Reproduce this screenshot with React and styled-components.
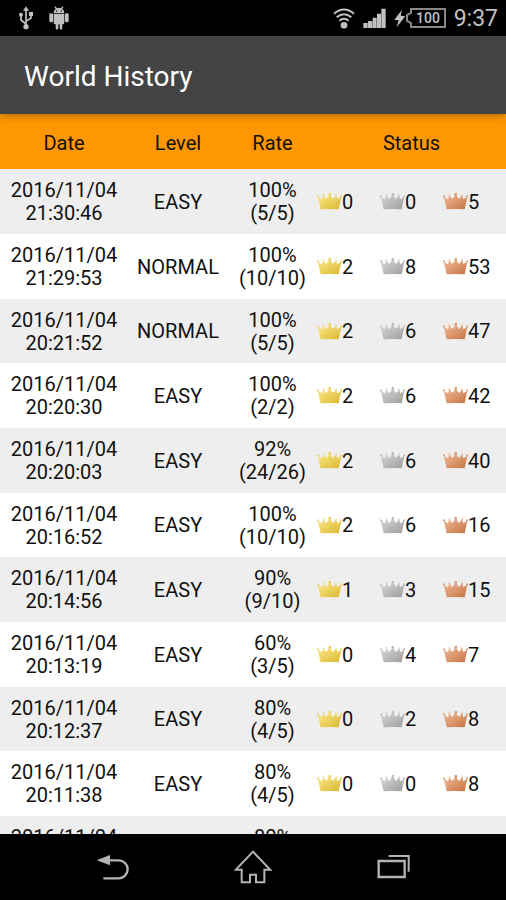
import React from 'react'
import styled, { createGlobalStyle } from 'styled-components'

const GlobalStyle = createGlobalStyle`
    * {
        box-sizing: border-box;
    }
    body {
        margin: 0;
        background-color: black;
        color: #111;
        font-family: Roboto, "Liberation Sans", sans-serif;
    }
`

const Screen = styled.div`
    display: flex;
    flex-direction: column;
    height: 100vh;
`

const StatusBar = styled.div`
    display: flex;
    flex: none;
    align-items: center;
    justify-content: space-between;
    height: 36px;
    padding: 0 8px 0 18px;
    background-color: black;
    color: #c0c0c0;
`

const StatusGroup = styled.div`
    display: flex;
    align-items: center;
    gap: ${props => props.$gap}px;
`

const Battery = styled.div`
    display: flex;
    align-items: center;
`

const Clock = styled.span`
    padding-top: 2px;
    font-size: 23px;
    line-height: 34px;
`

const AppBar = styled.header`
    position: relative;
    z-index: 1;
    display: flex;
    flex: none;
    align-items: center;
    height: 78px;
    padding: 4px 24px 0;
    background-color: #444;
    box-shadow: 0 2px 8px rgba(0, 0, 0, 0.3);
`

const Title = styled.h1`
    margin: 0;
    color: white;
    font-size: 28px;
    font-weight: 400;
    line-height: 36px;
`

const List = styled.main`
    flex: 1;
    min-height: 0;
    overflow: hidden;
    background-color: white;
`

const HistoryTable = styled.table`
    width: 100%;
    table-layout: fixed;
    border-collapse: collapse;
    font-size: 20px;
    line-height: 23px;
    text-align: center;
`

const Col = styled.col`
    width: ${props => props.$width}px;
`

const HeadCell = styled.th`
    height: 55px;
    padding: 4px 0 0;
    background-color: #ff9800;
    font-weight: 400;
`

const Row = styled.tr`
    height: 65px;
    background-color: white;

    &:nth-child(odd) {
        background-color: #eee;
    }
    &:nth-child(3n) {
        height: 64px;
    }
`

const Cell = styled.td`
    padding: 1px 0 0;
`

const Line = styled.div`
    white-space: nowrap;
`

const Medal = styled.div`
    display: flex;
    align-items: center;
`

const NavBar = styled.nav`
    display: flex;
    flex: none;
    justify-content: center;
    height: 66px;
    background-color: black;
`

const NavButton = styled.button`
    display: flex;
    align-items: center;
    justify-content: center;
    width: 140px;
    padding: 0;
    border: 0;
    background: none;
    color: #b4b4b4;
`

const crowns = {
    gold: ['#f6e07a', '#dcbc38'],
    silver: ['#cdcdcd', '#a3a3a3'],
    bronze: ['#e8ae8a', '#ca7a4a']
}

const history = [
    { date: '2016/11/04', time: '21:30:46', level: 'EASY', rate: '100%', score: '(5/5)', medals: [0, 0, 5] },
    { date: '2016/11/04', time: '21:29:53', level: 'NORMAL', rate: '100%', score: '(10/10)', medals: [2, 8, 53] },
    { date: '2016/11/04', time: '20:21:52', level: 'NORMAL', rate: '100%', score: '(5/5)', medals: [2, 6, 47] },
    { date: '2016/11/04', time: '20:20:30', level: 'EASY', rate: '100%', score: '(2/2)', medals: [2, 6, 42] },
    { date: '2016/11/04', time: '20:20:03', level: 'EASY', rate: '92%', score: '(24/26)', medals: [2, 6, 40] },
    { date: '2016/11/04', time: '20:16:52', level: 'EASY', rate: '100%', score: '(10/10)', medals: [2, 6, 16] },
    { date: '2016/11/04', time: '20:14:56', level: 'EASY', rate: '90%', score: '(9/10)', medals: [1, 3, 15] },
    { date: '2016/11/04', time: '20:13:19', level: 'EASY', rate: '60%', score: '(3/5)', medals: [0, 4, 7] },
    { date: '2016/11/04', time: '20:12:37', level: 'EASY', rate: '80%', score: '(4/5)', medals: [0, 2, 8] },
    { date: '2016/11/04', time: '20:11:38', level: 'EASY', rate: '80%', score: '(4/5)', medals: [0, 0, 8] },
    { date: '2016/11/04', time: '20:10:52', level: 'EASY', rate: '80%', score: '(4/5)', medals: [0, 0, 7] }
]

const CrownDefs = () => (
    <svg width="0" height="0" style={{ display: 'block' }} aria-hidden="true">
        <defs>
            {Object.keys(crowns).map(kind => (
                <linearGradient key={kind} id={kind} x1="0" y1="0" x2="1" y2="1">
                    <stop offset="0.2" stopColor={crowns[kind][0]} />
                    <stop offset="0.9" stopColor={crowns[kind][1]} />
                </linearGradient>
            ))}
        </defs>
    </svg>
)

const Crown = ({ kind }) => (
    <svg width="25" height="20" viewBox="0 0 75 60" fill={`url(#${kind})`} aria-hidden="true">
        <path d="M2 14 L15 22 L18 11 L20 11 L27 20 L31 18 L37 6 H39 L45 18 L49 20 L56 11 L58 11 L61 22 L73 14 L65 52 Q38 50 11 52 Z" />
        <circle cx="3" cy="13" r="3" />
        <circle cx="19" cy="9" r="2" />
        <circle cx="38" cy="6" r="4" />
        <circle cx="57" cy="9" r="2" />
        <circle cx="72" cy="13" r="3" />
    </svg>
)

const UsbIcon = () => (
    <svg width="16" height="24" viewBox="0 0 48 72" fill="none" stroke="currentColor" strokeWidth="5">
        <path d="M24 10 V60 M24 54 L9 42 V27 M24 46 L39 36 V24" />
        <path d="M24 1 L33 14 H15 Z" fill="currentColor" stroke="none" />
        <circle cx="24" cy="62" r="8" fill="currentColor" stroke="none" />
        <circle cx="9" cy="26" r="6" fill="currentColor" stroke="none" />
        <path d="M33 18 H45 V30 H33 Z" fill="currentColor" stroke="none" />
    </svg>
)

const AndroidIcon = () => (
    <svg width="20" height="24" viewBox="0 0 60 72" fill="currentColor">
        <path d="M14 21 A16 16 0 0 1 46 21 Z M14 23 H46 V50 Q46 55 41 55 H40 V66 Q40 71 36 71 Q32 71 32 66 V55 H28 V66 Q28 71 24 71 Q20 71 20 66 V55 H19 Q14 55 14 50 Z" />
        <rect x="1" y="22" width="11" height="27" rx="4" />
        <rect x="48" y="22" width="11" height="27" rx="4" />
        <path d="M18 2 L24 11 M42 2 L36 11" stroke="currentColor" strokeWidth="4" />
        <circle cx="23" cy="15" r="2" fill="black" />
        <circle cx="37" cy="15" r="2" fill="black" />
    </svg>
)

const WifiIcon = () => (
    <svg width="22" height="21" viewBox="0 0 66 63" fill="none" stroke="currentColor" strokeWidth="6">
        <path d="M3 17 Q33 -8 63 17 M11 28 Q33 9 55 28 M19 38 Q33 26 47 38" />
        <circle cx="33" cy="52" r="10" fill="currentColor" stroke="none" />
    </svg>
)

const SignalIcon = () => (
    <svg width="23" height="20" viewBox="0 0 69 60" fill="currentColor">
        <path d="M1 45 H14 V60 H1 Z M15 39 H28 V60 H15 Z M29 29 H41 V60 H29 Z M42 17 H54 V60 H42 Z M55 2 H68 V60 H55 Z" />
    </svg>
)

const BoltIcon = () => (
    <svg width="12" height="19" viewBox="0 0 36 57" fill="currentColor">
        <path d="M24 2 L1 32 L14 34 L8 55 L34 22 L20 20 Z" />
    </svg>
)

const BatteryIcon = () => (
    <svg width="40" height="20" viewBox="0 0 40 20" fill="none" stroke="currentColor" strokeWidth="2">
        <path d="M5 1 H39 V19 H5 V15 L1 13 V7 L5 5 Z" strokeOpacity="0.7" />
        <text x="22" y="15" textAnchor="middle" fontSize="14" fontWeight="500" fill="currentColor" stroke="none">100</text>
    </svg>
)

const BackIcon = () => (
    <svg width="34" height="28" viewBox="0 0 102 84" fill="none" stroke="currentColor" strokeWidth="7">
        <path d="M40 22 H68 A27 27 0 0 1 68 76 H22" />
        <path d="M2 22 L42 6 V37 Z" fill="currentColor" stroke="none" />
    </svg>
)

const HomeIcon = () => (
    <svg width="38" height="34" viewBox="0 0 114 102" fill="none" stroke="currentColor" strokeWidth="6">
        <path d="M57 5 L6 59 H23 V97 H48 V74 H66 V97 H91 V59 H108 Z" />
    </svg>
)

const RecentIcon = () => (
    <svg width="34" height="26" viewBox="0 0 102 78" fill="none" stroke="currentColor" strokeWidth="6">
        <path d="M8 21 H86 V69 H8 Z" strokeWidth="7" />
        <path d="M38 6 H98 V53" />
    </svg>
)

const HistoryRow = ({ item }) => (
    <Row>
        <Cell>
            <Line>{item.date}</Line>
            <Line>{item.time}</Line>
        </Cell>
        <Cell>{item.level}</Cell>
        <Cell>
            <Line>{item.rate}</Line>
            <Line>{item.score}</Line>
        </Cell>
        {Object.keys(crowns).map((kind, i) => (
            <Cell key={kind}>
                <Medal>
                    <Crown kind={kind} />
                    <span>{item.medals[i]}</span>
                </Medal>
            </Cell>
        ))}
    </Row>
)

const App = () => {
    return (
        <React.Fragment>
            <GlobalStyle />
            <Screen>
                <StatusBar>
                    <StatusGroup $gap={15}>
                        <UsbIcon />
                        <AndroidIcon />
                    </StatusGroup>
                    <StatusGroup $gap={8}>
                        <WifiIcon />
                        <SignalIcon />
                        <Battery>
                            <BoltIcon />
                            <BatteryIcon />
                        </Battery>
                        <Clock>9:37</Clock>
                    </StatusGroup>
                </StatusBar>
                <AppBar>
                    <Title>World History</Title>
                </AppBar>
                <List>
                    <CrownDefs />
                    <HistoryTable>
                        <colgroup>
                            <Col $width={128} />
                            <Col $width={100} />
                            <Col $width={89} />
                            <Col $width={63} />
                            <Col $width={63} />
                            <Col $width={63} />
                        </colgroup>
                        <thead>
                            <tr>
                                <HeadCell>Date</HeadCell>
                                <HeadCell>Level</HeadCell>
                                <HeadCell>Rate</HeadCell>
                                <HeadCell colSpan={3}>Status</HeadCell>
                            </tr>
                        </thead>
                        <tbody>
                            {history.map(item => (
                                <HistoryRow key={item.time} item={item} />
                            ))}
                        </tbody>
                    </HistoryTable>
                </List>
                <NavBar>
                    <NavButton aria-label="Back"><BackIcon /></NavButton>
                    <NavButton aria-label="Home"><HomeIcon /></NavButton>
                    <NavButton aria-label="Recent apps"><RecentIcon /></NavButton>
                </NavBar>
            </Screen>
        </React.Fragment>
    )
}

export default App
